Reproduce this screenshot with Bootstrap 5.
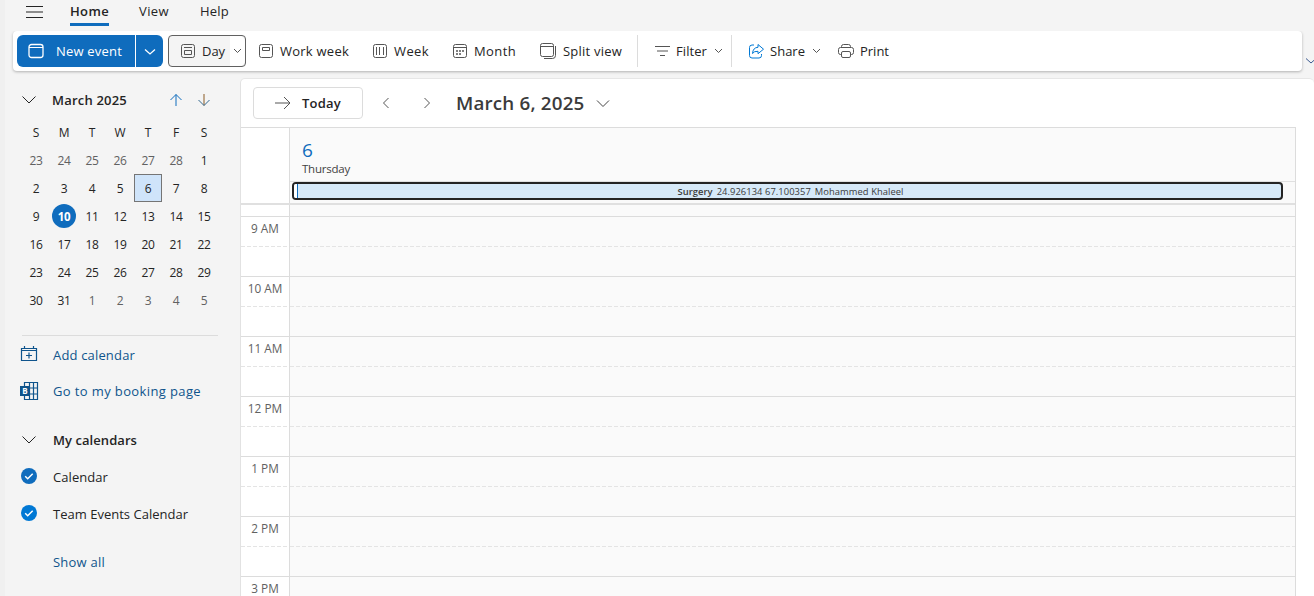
<!DOCTYPE html>
<html lang="en">
<head>
<meta charset="utf-8">
<meta name="viewport" content="width=device-width, initial-scale=1">
<title>Calendar</title>
<link href="https://cdn.jsdelivr.net/npm/bootstrap@5.3.0/dist/css/bootstrap.min.css" rel="stylesheet">
<style>
body{font-family:"Open Sans","Noto Sans",sans-serif;font-size:13px;line-height:20px;color:#242424;background:#f4f4f4;height:596px;overflow:hidden;border-left:5px solid #f0f0f0}
svg{fill:none;stroke:currentColor;stroke-width:1;flex:none;display:block}
.btn{--bs-btn-padding-x:0;--bs-btn-padding-y:0;--bs-btn-font-size:13px;--bs-btn-line-height:20px;--bs-btn-color:#242424;--bs-btn-border-width:0;text-align:left;flex:none;white-space:nowrap}
.menu-row{height:31px;padding-left:21px}
.menu-row .nav-link{padding:0;height:26px;line-height:22px;color:#242424;position:relative}
.menu-row .active{font-weight:600;border-bottom:3px solid #0f6cbd}
.ribbon{height:40px;width:1289px;margin-left:8px;padding-left:4px;background:#fff;border-radius:4px;box-shadow:0 1px 3px rgba(0,0,0,.28);flex:none}
.blue{background:#0f6cbd;color:#fff;height:32px}
.day-btn{width:78px;height:32px;border:1px solid #616161!important;border-radius:4px;background:#f4f4f4;margin-left:4px}
.tool{height:32px;color:#242424}
.tool svg,.day-btn svg{color:#555}
.rule{width:1px;height:32px;background:#dcdcdc;flex:none}
.side{width:235px;flex:none;padding-left:16px}
.mini{display:grid;grid-template-columns:repeat(7,28px);grid-auto-rows:28px;font-size:12px;letter-spacing:-.3px;line-height:29px;text-align:center}
.mini .out{color:#616161}
.mini .picked{background:#cfe4fa;border:1px solid #757575;line-height:27px}
.mini .today{background:#0f6cbd;color:#fff;font-weight:700;width:24px;height:24px;line-height:25px;border-radius:50%;margin:2px;font-size:11.5px}
.side-rule{height:1px;width:196px;background:#dcdcdc;margin:21px 0 0 1px}
.side-item{height:20px;display:flex;align-items:center;color:#242424;text-decoration:none}
.side-item>svg,.side-item>.lead-gap{width:20px;margin-right:12px;flex:none;margin-left:-2px}
.side-item.linked{color:#0f548c}
.pane{background:#fff;border-top:1px solid #e6e6e6;border-left:1px solid #e2e2e2;border-radius:5px 5px 0 0;height:518px;overflow:hidden}
.date-bar{height:48px;padding:8px 0 0 12px}
.today-btn{width:110px;height:32px;border:1px solid #dcdcdc!important;border-radius:4px;font-weight:600;font-size:13px}
.date-title{font-size:18.8px;font-weight:600;color:#3b3b3b;line-height:32px;white-space:nowrap}
.sched{width:1055px;border-top:1px solid #dcdcdc;border-right:1px solid #dcdcdc}
.hours{width:49px;flex:none;border-right:1px solid #dcdcdc;background:#fff}
.lane{background:#fafafa}
.headrow{height:75px}
.day-no{color:#0f6cbd;font-size:19px;line-height:24px}
.all-day{height:22px;border-top:1px solid #e0e0e0}
.event{width:991px;height:18px;margin-left:2px;border:2px solid #242424;border-radius:4px;background:#d6e9f8;font-size:9.35px;line-height:15px;text-align:center;padding-left:6px;color:#3b3b3b;position:relative;white-space:pre}
.event::before{content:"";position:absolute;left:0;top:0;bottom:0;width:4px;background:#fff;border-right:1px solid #0f6cbd;border-radius:2px 0 0 2px}
.split{height:2px;background:#e0e0e0}
.slot{height:60px;border-top:1px solid #dcdcdc}
.slot .half{height:30px;background:repeating-linear-gradient(90deg,#e4e4e4 0 4px,transparent 4px 6px) bottom/100% 1px no-repeat}
.hr-label{font-size:11.8px;line-height:23px;text-align:center;color:#616161}
.slots{height:391px;overflow:hidden}
</style>
</head>
<body>
<nav class="menu-row nav d-flex flex-nowrap">
  <svg width="18" height="24" viewBox="0 0 18 24" style="margin-left:-1px"><path d="M1 6.500h17M1 12h17M1 17.500h17"/></svg>
  <a class="nav-link active" style="margin-left:27px" href="#"><span class="fit" data-w="39">Home</span></a>
  <a class="nav-link" style="margin-left:30px" href="#"><span class="fit" data-w="30">View</span></a>
  <a class="nav-link" style="margin-left:31px" href="#"><span class="fit" data-w="29">Help</span></a>
</nav>
<div class="d-flex overflow-hidden" style="margin-bottom:-6px;padding-bottom:6px">
<div class="ribbon d-flex align-items-center">
  <button class="btn blue rounded-0 rounded-start d-flex align-items-center" style="width:118px"><svg width="16" height="16" viewBox="0 0 16 16" style="margin:0 12px 0 11px"><rect x="1" y="1.500" width="14" height="13" rx="2.500" stroke-width="1.300"/><path d="M1 4.500h14"/></svg><span class="fit" data-w="66">New event</span></button>
  <button class="btn blue rounded-0 rounded-end d-flex align-items-center justify-content-center" style="width:27px;margin-left:1px"><svg width="12" height="8" viewBox="0 0 12 8"><path d="M1 2.500l5 4.500 5-4.500" stroke-width="1.300"/></svg></button>
  <button class="btn day-btn d-flex align-items-center" style="margin-left:5px"><svg width="16" height="16" viewBox="0 0 16 16" style="margin:0 6px 0 11px"><rect x="1.500" y="1.500" width="13" height="13" rx="2"/><path d="M4 4.500h8M4.500 7.500h7v4h-7z"/></svg><span class="fit" data-w="23">Day</span><span class="bg-white h-100 ms-auto d-flex align-items-center justify-content-center rounded-end" style="width:15px"><svg width="9" height="6" viewBox="0 0 9 6"><path d="M1 1l3.500 3.500L8 1"/></svg></span></button>
  <button class="btn tool d-flex align-items-center" style="width:114px;margin-left:12px"><svg width="16" height="16" viewBox="0 0 16 16" style="margin-right:6px"><rect x="1.500" y="1.500" width="13" height="13" rx="2"/><path d="M4.500 4.500h7v3h-7z"/></svg><span class="fit" data-w="69">Work week</span></button>
  <button class="btn tool d-flex align-items-center" style="width:80px"><svg width="16" height="16" viewBox="0 0 16 16" style="margin-right:6px"><rect x="1.500" y="1.500" width="13" height="13" rx="2"/><path d="M4.500 4v8M7.500 4v8M11.500 4v8"/></svg><span class="fit" data-w="35">Week</span></button>
  <button class="btn tool d-flex align-items-center" style="width:87px"><svg width="16" height="16" viewBox="0 0 16 16" style="margin-right:6px"><rect x="1.500" y="1.500" width="13" height="13" rx="2"/><path d="M1 4.500h14"/><path d="M7 8h2M10 8h2M4 11h2M7 11h2M4 8h2" stroke-width="1.500"/></svg><span class="fit" data-w="42">Month</span></button>
  <button class="btn tool d-flex align-items-center" style="width:98px"><svg width="17" height="17" viewBox="0 0 17 17" style="margin-right:6px;margin-left:1px"><rect x=".5" y=".5" width="13" height="13" rx="2"/><path d="M.5 3.500h13M15.500 3v9.500q0 3-3 3H4"/></svg><span class="fit" data-w="59">Split view</span></button>
  <span class="rule"></span>
  <button class="btn tool d-flex align-items-center" style="width:77px;margin-left:16px"><svg width="16" height="16" viewBox="0 0 16 16" style="margin-right:6px"><path d="M1 3.500h15M3 8h11M6 12.500h5"/></svg><span class="fit" data-w="31">Filter</span><svg width="9" height="6" viewBox="0 0 9 6" style="margin-left:7px"><path d="M1 1l3.500 3.500L8 1"/></svg></button>
  <span class="rule"></span>
  <button class="btn tool d-flex align-items-center" style="width:90px;margin-left:16px"><svg width="17" height="16" viewBox="0 0 17 16" style="color:#0078d4;margin-right:5px" stroke-width="1.200"><path d="M6 2H4Q1.500 2 1.500 4.500v8Q1.500 15 4 15h7q2.500 0 2.500-2.500V11M10 1.500l5.500 4.700-5.500 4.500V8.300Q6 8 4.500 10.500 5 4.500 10 4.300z"/></svg><span class="fit" data-w="35">Share</span><svg width="9" height="6" viewBox="0 0 9 6" style="margin-left:7px"><path d="M1 1l3.500 3.500L8 1"/></svg></button>
  <button class="btn tool d-flex align-items-center"><svg width="16" height="16" viewBox="0 0 16 16" style="margin-right:6px"><path d="M3.500 11.500h-1Q.5 11.500.5 9.500v-3q0-2 2-2h11q2 0 2 2v3q0 2-2 2h-1M3.500 4.500v-1q0-2 2-2h5q2 0 2 2v1"/><rect x="3.500" y="8.500" width="9" height="6" rx="1.500"/></svg><span class="fit" data-w="29">Print</span></button>
</div>
<svg width="10" height="8" viewBox="0 0 10 8" style="margin:26px -4px 0 4px;color:#3b5a90"><path d="M0 1.500l5 4.500 5-4.500"/></svg>
</div>
<div class="d-flex" style="margin-top:7px">
<aside class="side">
  <div class="d-flex align-items-center" style="height:40px;padding-top:4px">
    <svg width="16" height="10" viewBox="0 0 16 10"><path d="M1.500 1.500L8 8l6.500-6.500"/></svg>
    <strong class="fit fw-semibold" style="margin-left:15px" data-w="75">March 2025</strong>
    <svg width="14" height="14" viewBox="0 0 14 14" style="margin-left:42px;color:#0f6cbd"><path d="M7 13V1.500M1.500 7L7 1.500 12.500 7"/></svg>
    <svg width="14" height="14" viewBox="0 0 14 14" style="margin-left:14px"><path d="M7 1v11.500" stroke="#8a5a24"/><path d="M1.500 7L7 12.500 12.500 7" stroke="#33688f"/></svg>
  </div>
  <div class="mini" id="mini" style="margin-left:1px"></div>
  <div class="side-rule"></div>
  <a class="side-item linked" style="margin-top:9px" href="#"><svg width="20" height="18" viewBox="0 0 20 18" style="margin-top:-2px"><path d="M2.500 3.500h15v12h-15zM2.500 5.500h15M5.500 1v3M14.500 1v3M10 7.500v6M7 10.500h6" stroke-width="1.200"/></svg><span class="fit" style="margin-left:2px" data-w="82">Add calendar</span></a>
  <a class="side-item linked" style="margin-top:16px" href="#"><svg width="20" height="20" viewBox="0 0 20 20"><path d="M5.500 1.500h13v17h-13zM5.500 7h13M5.500 13h13M10.500 1.500v17M14.500 1.500v17" stroke-width="1.200"/><path d="M1 5h10v10H1z" fill="#0f548c" stroke="none"/><text x="3.300" y="13" font-size="8" font-weight="700" fill="#fff" stroke="none">B</text></svg><span class="fit" style="margin-left:2px" data-w="148">Go to my booking page</span></a>
  <div class="side-item" style="margin-top:29px"><svg width="20" height="10" viewBox="0 0 20 10"><path d="M3.500 1.500L10 8l6.500-6.500"/></svg><span class="fit fw-semibold" style="margin-left:2px" data-w="84">My calendars</span></div>
  <div class="side-item" style="margin-top:17px"><svg width="20" height="18" viewBox="0 0 20 18"><circle cx="10" cy="8" r="8" fill="#0f6cbd" stroke="none"/><path d="M6.200 8.300l2.500 2.500 5-5" stroke="#fff" stroke-width="1.500"/></svg><span class="fit" style="margin-left:2px" data-w="55">Calendar</span></div>
  <div class="side-item" style="margin-top:17px"><svg width="20" height="18" viewBox="0 0 20 18"><circle cx="10" cy="8" r="8" fill="#0078d4" stroke="none"/><path d="M6.200 8.300l2.500 2.500 5-5" stroke="#fff" stroke-width="1.500"/></svg><span class="fit" style="margin-left:2px" data-w="135">Team Events Calendar</span></div>
  <a class="side-item linked" style="margin-top:28px" href="#"><span class="lead-gap"></span><span class="fit" style="margin-left:2px" data-w="52">Show all</span></a>
</aside>
<main class="pane flex-grow-1">
  <div class="date-bar d-flex">
    <button class="btn today-btn d-flex align-items-center"><svg width="16" height="14" viewBox="0 0 16 14" style="margin:0 11px 0 21px;color:#555"><path d="M0 7h15M9 1l6 6-6 6"/></svg><span class="fit" data-w="39">Today</span></button>
    <svg width="8" height="12" viewBox="0 0 8 12" style="margin:10px 0 0 19px;color:#555"><path d="M6.500 1L1.500 6l5 5"/></svg>
    <svg width="8" height="12" viewBox="0 0 8 12" style="margin:10px 0 0 33px;color:#555"><path d="M1.500 1l5 5-5 5"/></svg>
    <div class="date-title" style="margin-left:25px"><span class="fit" data-w="128.500">March 6, 2025</span></div>
    <svg width="14" height="9" viewBox="0 0 14 9" style="margin:12px 0 0 11px;color:#444"><path d="M1 1.500L7 7.500l6-6"/></svg>
  </div>
  <section class="sched">
    <div class="d-flex headrow">
      <div class="hours"></div>
      <div class="lane flex-grow-1">
        <div style="height:53px;padding:10px 0 0 12px"><div class="day-no">6</div><div style="font-size:11.500px;line-height:14px;color:#424242"><span class="fit" data-w="48">Thursday</span></div></div>
        <div class="all-day"><div class="event"><span class="fit" data-w="226"><b class="fw-semibold me-1">Surgery</b>24.926134 67.100357<span class="ms-1">Mohammed Khaleel</span></span></div></div>
      </div>
    </div>
    <div class="split"></div>
    <div class="d-flex slots"><div class="hours" id="hours"><div style="height:11px"></div></div><div class="lane flex-grow-1" id="lane"><div style="height:11px"></div></div></div>
  </section>
</main>
</div>
<script src="https://cdn.jsdelivr.net/npm/bootstrap@5.3.0/dist/js/bootstrap.bundle.min.js"></script>
<script>
const mini=document.getElementById('mini');
const cell=(t,c)=>{const d=document.createElement('div');d.textContent=t;if(c)d.className=c;mini.append(d)};
['S','M','T','W','T','F','S'].forEach(d=>cell(d));
for(let i=23;i<29;i++)cell(i,'out');
for(let i=1;i<32;i++)cell(i,i===6?'picked':i===10?'today':'');
for(let i=1;i<6;i++)cell(i,'out');
['9 AM','10 AM','11 AM','12 PM','1 PM','2 PM','3 PM'].forEach((t,i)=>{
  const s=i===6?' style="height:20px"':'';
  document.getElementById('hours').insertAdjacentHTML('beforeend','<div class="slot"'+s+'><div class="half hr-label"'+s+'>'+t+'</div></div>');
  document.getElementById('lane').insertAdjacentHTML('beforeend','<div class="slot"'+s+'>'+(i===6?'':'<div class="half"></div>')+'</div>');
});
// Track each label evenly to its design width
document.querySelectorAll('.fit').forEach(e=>{
  e.style.display='inline-block';e.style.whiteSpace='pre';
  const w=e.getBoundingClientRect().width,n=e.textContent.length;
  e.style.letterSpacing=((e.dataset.w-w)/n).toFixed(3)+'px';
});
</script>
</body>
</html>
